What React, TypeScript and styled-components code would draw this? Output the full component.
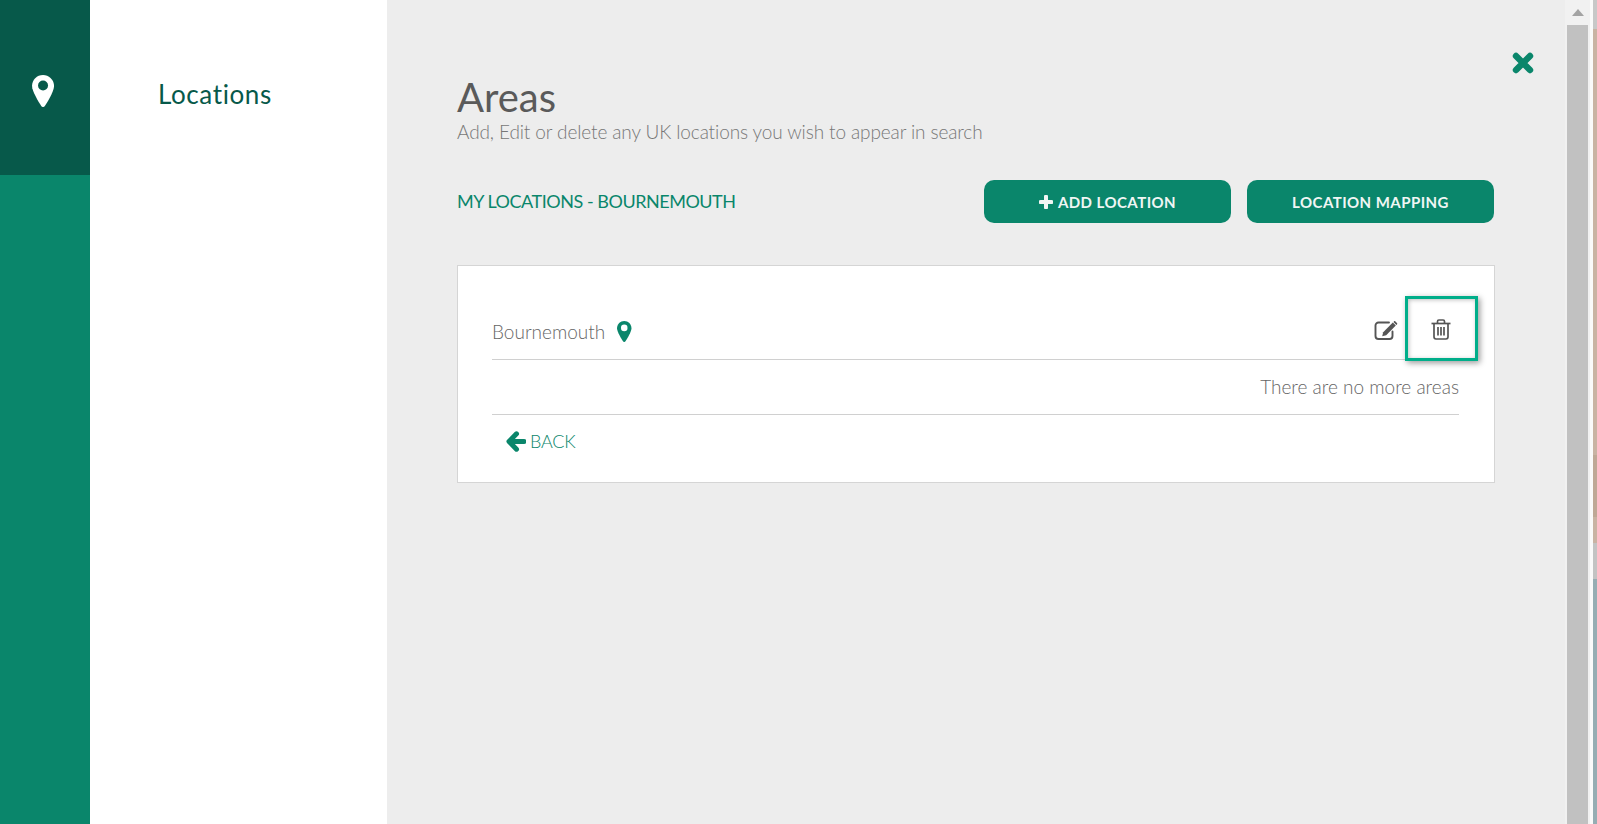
import styled, { createGlobalStyle } from 'styled-components';

const GREEN = '#0a866b';
const DARK = '#07594a';

// CSS
const GlobalStyle = createGlobalStyle`
  html, body {
    margin: 0;
    height: 100%;
    overflow: hidden;
    background: #fff;
    font-family: Lato, "Liberation Sans", sans-serif;
  }
`;

const Page = styled.div`
  display: flex;
  width: 1597px;
  height: 824px;
`;

const IconRail = styled.div`
  width: 90px;
  flex: none;
  background: ${GREEN};
`;

const RailTile = styled.div`
  height: 175px;
  background: ${DARK};
  color: #fff;
  display: flex;
  justify-content: center;
  padding-top: 75px;
  padding-right: 4px;
  box-sizing: border-box;
`;

const SideMenu = styled.div`
  width: 297px;
  flex: none;
  background: #fff;
  padding: 76px 0 0 68px;
  box-sizing: border-box;
`;

const MenuItem = styled.div`
  font-size: 26px;
  line-height: 36px;
  letter-spacing: 0.6px;
  color: ${DARK};
`;

const Main = styled.div`
  position: relative;
  flex: 1;
  background: #ededed;
  padding: 75px 70px 0 70px;
  box-sizing: border-box;
`;

const CloseButton = styled.div`
  position: absolute;
  top: 52px;
  right: 31px;
  color: ${GREEN};
  line-height: 0;
`;

const Title = styled.h1`
  margin: 0;
  font-size: 40px;
  line-height: 45px;
  font-weight: 400;
  color: #5a5a5a;
`;

const Subtitle = styled.p`
  margin: 0;
  font-size: 19px;
  line-height: 24px;
  letter-spacing: -0.11px;
  font-weight: 300;
  color: #777;
`;

const Toolbar = styled.div`
  display: flex;
  align-items: center;
  justify-content: space-between;
  margin-top: 36px;
  padding-right: 1px;
`;

const SectionLabel = styled.div`
  font-size: 18px;
  line-height: 20px;
  padding-bottom: 2px;
  letter-spacing: -0.47px;
  color: ${GREEN};
`;

const ButtonGroup = styled.div`
  display: flex;
  gap: 16px;
`;

const Button = styled.button`
  width: 247px;
  height: 43px;
  border: none;
  border-radius: 10px;
  background: ${GREEN};
  color: #f0f6f4;
  font-family: inherit;
  font-size: 15px;
  font-weight: 700;
  letter-spacing: 0.45px;
  display: flex;
  align-items: center;
  justify-content: center;
  gap: 5px;
`;

const Card = styled.div`
  margin-top: 42px;
  height: 218px;
  background: #fff;
  border: 1px solid #d5d5d5;
  padding: 0 35px 0 34px;
  box-sizing: border-box;
`;

const AreaRow = styled.div`
  position: relative;
  height: 94px;
  border-bottom: 1px solid #d0d0d0;
  display: flex;
  align-items: flex-end;
  justify-content: space-between;
  padding-bottom: 16px;
  box-sizing: border-box;
`;

const AreaName = styled.div`
  display: flex;
  align-items: center;
  gap: 12px;
  font-size: 19px;
  font-weight: 300;
  color: #666;
`;

const RowIcons = styled.div`
  display: flex;
  align-items: center;
  gap: 33px;
  padding: 0 8px 3px 0;
  color: #555;
  line-height: 0;
`;

const Highlight = styled.div`
  position: absolute;
  right: -19px;
  bottom: -2px;
  width: 73px;
  height: 65px;
  border: 3px solid #00ae8a;
  box-sizing: border-box;
  box-shadow: 2px 2px 6px rgba(0, 0, 0, 0.4), inset 1px 1px 4px rgba(0, 0, 0, 0.25);
  pointer-events: none;
`;

const NoMore = styled.div`
  height: 55px;
  border-bottom: 1px solid #d0d0d0;
  display: flex;
  align-items: center;
  justify-content: flex-end;
  padding-bottom: 2px;
  font-size: 19px;
  font-weight: 300;
  color: #666;
  box-sizing: border-box;
`;

const BackLink = styled.div`
  display: flex;
  align-items: center;
  gap: 4px;
  margin: 15px 0 0 14px;
  font-size: 18px;
  letter-spacing: -0.25px;
  font-weight: 300;
  color: ${GREEN};
`;

const ScrollBar = styled.div`
  width: 32px;
  flex: none;
  display: flex;
  background: #fff;
`;

const ScrollTrack = styled.div`
  width: 28px;
  padding: 0 5px 0 2px;
  box-sizing: border-box;
  background: linear-gradient(to right, #f1f1f1 25px, #fafafa 25px);
`;

const ScrollArrow = styled.div`
  height: 25px;
  display: flex;
  align-items: center;
  justify-content: center;
`;

const ScrollThumb = styled.div`
  height: 799px;
  background: #c1c1c1;
`;

const EdgeStrip = styled.div`
  flex: 1;
  background: linear-gradient(
    to bottom,
    #c8c8c8 0 29px,
    #c9b3a3 29px 455px,
    #bfa896 455px 517px,
    #c9b3a3 517px 543px,
    #c3c3c3 543px 579px,
    #96adb3 579px
  );
`;

// icons
const Pin = ({ size, hole }: { size: number; hole: string }) => (
  <svg width={size * 0.69} height={size} viewBox="0 0 22 32">
    <path
      d="M11 0C4.900 0 0 4.900 0 11c0 5 6.400 15.900 9.400 20.200.8 1.100 2.400 1.100 3.200 0C15.600 26.900 22 16 22 11 22 4.900 17.100 0 11 0z"
      fill="currentColor"
    />
    <circle cx="11" cy="10.500" r="5" fill={hole} />
  </svg>
);

const CloseIcon = () => (
  <svg width="22" height="22" viewBox="0 0 22 22">
    <path d="M4 4l14 14M18 4L4 18" stroke="currentColor" strokeWidth="6.400" strokeLinecap="round" />
  </svg>
);

const PlusIcon = () => (
  <svg width="14" height="14" viewBox="0 0 14 14">
    <path d="M7 1.500v11M1.500 7h11" stroke="currentColor" strokeWidth="4" strokeLinecap="round" />
  </svg>
);

const BackArrow = () => (
  <svg width="20" height="21" viewBox="0 0 20 21">
    <path
      d="M10.500 2.800L3 10.500l7.500 7.700M4 10.500h14"
      fill="none"
      stroke={GREEN}
      strokeWidth="5"
      strokeLinecap="round"
      strokeLinejoin="round"
    />
  </svg>
);

const EditIcon = () => (
  <svg width="24" height="20" viewBox="0 0 24 20">
    <path
      d="M15 2.500H4.500A3 3 0 0 0 1.500 5.500v10.500a3 3 0 0 0 3 3h11a3 3 0 0 0 3-3v-4.500"
      fill="none"
      stroke="currentColor"
      strokeWidth="1.900"
      strokeLinecap="round"
    />
    <path d="M18.800 2.600l3 3-9.600 9.600-4 1 1-4z" fill="currentColor" />
    <path d="M20 1.400c.4-.4 1-.4 1.400 0l1.600 1.600c.4.400.4 1 0 1.400l-.600.600-3-3z" fill="currentColor" />
  </svg>
);

const TrashIcon = () => (
  <svg width="20" height="21" viewBox="0 0 20 21" fill="none" stroke="currentColor" strokeWidth="1.700">
    <path d="M0.500 4.500h19" />
    <path d="M6.500 4V2.400c0-.8.600-1.400 1.400-1.400h4.200c.8 0 1.400.600 1.400 1.400V4" />
    <path d="M3 4.500v13.300c0 1.200.900 2.200 2 2.200h10c1.100 0 2-1 2-2.200V4.500" />
    <path d="M7 8v8.500M10 8v8.500M13 8v8.500" />
  </svg>
);

const App = () => {
  return (
    <Page>
      <GlobalStyle />
      <IconRail>
        <RailTile>
          <Pin size={32} hole={DARK} />
        </RailTile>
      </IconRail>
      <SideMenu>
        <MenuItem>Locations</MenuItem>
      </SideMenu>
      <Main>
        <CloseButton>
          <CloseIcon />
        </CloseButton>
        <Title>Areas</Title>
        <Subtitle>Add, Edit or delete any UK locations you wish to appear in search</Subtitle>
        <Toolbar>
          <SectionLabel>MY LOCATIONS - BOURNEMOUTH</SectionLabel>
          <ButtonGroup>
            <Button>
              <PlusIcon />
              ADD LOCATION
            </Button>
            <Button>LOCATION MAPPING</Button>
          </ButtonGroup>
        </Toolbar>
        <Card>
          <AreaRow>
            <AreaName>
              Bournemouth
              <span style={{ color: GREEN, lineHeight: 0 }}>
                <Pin size={21} hole="#fff" />
              </span>
            </AreaName>
            <RowIcons>
              <EditIcon />
              <TrashIcon />
            </RowIcons>
            <Highlight />
          </AreaRow>
          <NoMore>There are no more areas</NoMore>
          <BackLink>
            <BackArrow />
            BACK
          </BackLink>
        </Card>
      </Main>
      <ScrollBar>
        <ScrollTrack>
          <ScrollArrow>
            <svg width="12" height="7" viewBox="0 0 12 7">
              <path d="M6 0l6 7H0z" fill="#a3a3a3" />
            </svg>
          </ScrollArrow>
          <ScrollThumb />
        </ScrollTrack>
        <EdgeStrip />
      </ScrollBar>
    </Page>
  );
};

export default App;
